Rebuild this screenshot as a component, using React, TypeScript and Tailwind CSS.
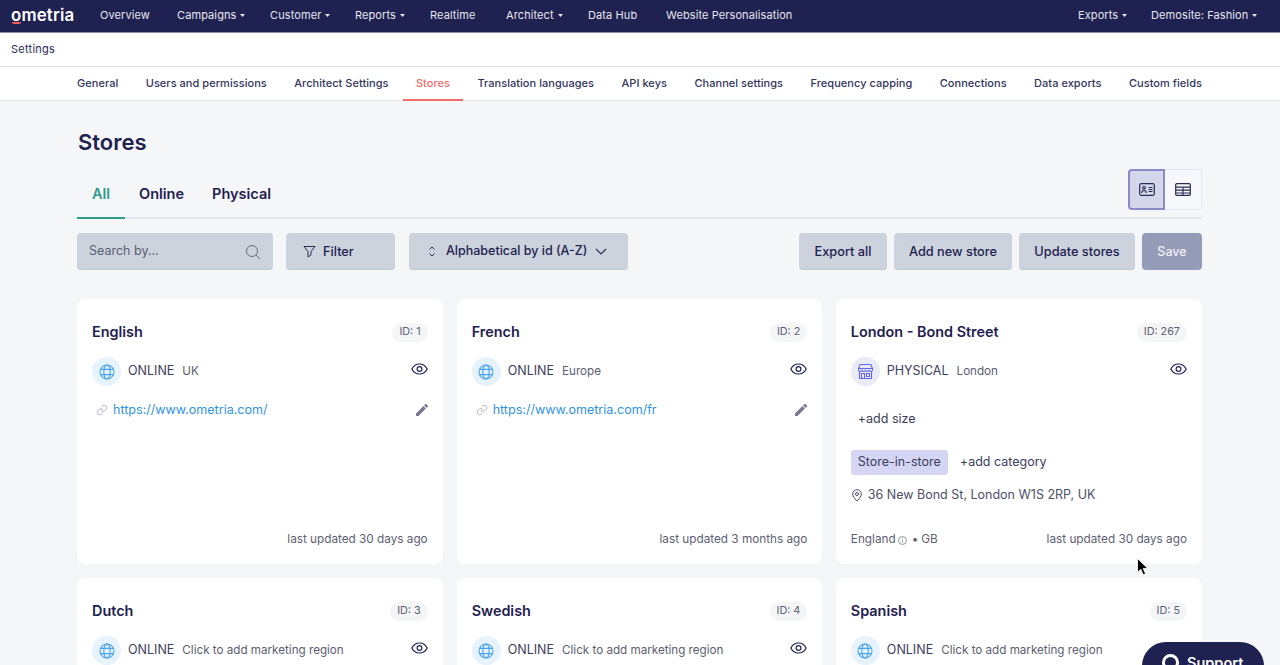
import React from "react";

const INTER = "font-['Inter',sans-serif]";
const NAVFONT = "font-['Inter',sans-serif]";

function Caret() {
  return (
    <svg width="5" height="3" viewBox="0 0 5 3" className="ml-[4px] mt-[1px]">
      <path d="M0 0h5L2.5 3z" fill="currentColor" />
    </svg>
  );
}

function NavItem({ label, caret, w }: { label: string; caret?: boolean; w: string }) {
  return (
    <div className={`flex items-center text-[11px] tracking-[0.1px] text-[#e6e7ee] ${w}`}>
      <span className="whitespace-nowrap">{label}</span>
      {caret && <Caret />}
    </div>
  );
}

function Globe() {
  return (
    <svg width="16" height="16" viewBox="0 0 16 16" fill="none" stroke="#4aa3ee" strokeWidth="1.1">
      <circle cx="8" cy="8" r="7" />
      <ellipse cx="8" cy="8" rx="3.2" ry="7" />
      <path d="M1.6 5.4h12.8M1.6 10.6h12.8" />
    </svg>
  );
}

function Shop() {
  return (
    <svg width="17" height="17" viewBox="0 0 17 17" fill="none" stroke="#6366e8" strokeWidth="1.1">
      <path d="M3.2 1.5h10.6l1.7 4v1.2a1.7 1.7 0 0 1-3.5 0 1.7 1.7 0 0 1-3.5 0 1.7 1.7 0 0 1-3.5 0 1.7 1.7 0 0 1-3.5 0V5.500z" />
      <path d="M1.500 5.500h14" />
      <path d="M2.500 8.500v7h12v-7" />
      <path d="M4.500 15.500v-5h3v5M9.500 10.500h3v3h-3z" />
    </svg>
  );
}

function Eye() {
  return (
    <svg width="17" height="12" viewBox="0 0 17 12" fill="none" stroke="#1f2150" strokeWidth="1.2">
      <path d="M.8 6C2.500 2.700 5.200 1 8.500 1s6 1.700 7.700 5c-1.700 3.300-4.400 5-7.700 5S2.500 9.300.8 6z" />
      <circle cx="8.500" cy="6" r="2.400" />
    </svg>
  );
}

function LinkIcon() {
  return (
    <svg width="12" height="12" viewBox="0 0 24 24" fill="none" stroke="#b4b8c4" strokeWidth="2" strokeLinecap="round">
      <path d="M10 13a5 5 0 0 0 7.500.5l3-3a5 5 0 0 0-7-7l-1.700 1.700" />
      <path d="M14 11a5 5 0 0 0-7.500-.5l-3 3a5 5 0 0 0 7 7l1.700-1.700" />
    </svg>
  );
}

function Pencil() {
  return (
    <svg width="12" height="12" viewBox="0 0 12 12" fill="#7a7890">
      <path d="M0 12V9.500L7.400 2.100l2.500 2.500L2.500 12zM8.100 1.400 9.200.3a1 1 0 0 1 1.400 0l1.100 1.100a1 1 0 0 1 0 1.400l-1.100 1.100z" />
    </svg>
  );
}

type Store = {
  name: string;
  id: number;
  kind: "ONLINE" | "PHYSICAL";
  region: string;
  url?: string;
  updated?: string;
};

function Card({ s, third, children }: { s: Store; third?: boolean; children?: React.ReactNode }) {
  const physical = s.kind === "PHYSICAL";
  return (
    <div className={`flex h-[265px] flex-col rounded-[8px] bg-white pt-[22px] pr-[15px] pb-[15px] ${third ? "pl-[14.5px]" : "pl-[15px]"}`}>
      <div className="flex h-[22px] items-center justify-between">
        <div className="text-[14.4px] font-semibold text-[#1f2150]">{s.name}</div>
        <div className="flex h-[19px] items-center rounded-full bg-[#f4f5f7] px-[7px] text-[10.8px] text-[#5c5e72]">ID: {s.id}</div>
      </div>
      <div className="mt-[14px] flex h-[29px] items-center">
        <div className={`flex size-[29px] items-center justify-center rounded-full ${physical ? "bg-[#e9ebf6]" : "bg-[#e6f2fc]"}`}>
          {physical ? <Shop /> : <Globe />}
        </div>
        <span className="ml-[7px] text-[12.5px] text-[#3b3d5c]">{s.kind}</span>
        <span className="ml-[8px] text-[11.65px] text-[#5c5e72]">{s.region}</span>
        <div className="-mt-[5px] ml-auto"><Eye /></div>
      </div>
      {s.url && (
        <div className="mt-[16px] flex h-[16px] items-center">
          <div className="ml-[4px]"><LinkIcon /></div>
          <span className="ml-[5px] text-[12.55px] text-[#2f93e8]">{s.url}</span>
          <div className="ml-auto"><Pencil /></div>
        </div>
      )}
      {children}
      {s.updated && (
        <div className="mt-auto flex items-center justify-end text-[11.75px] text-[#5c5e72]">{s.updated}</div>
      )}
    </div>
  );
}

function Btn({ children, w }: { children: React.ReactNode; w: string }) {
  return (
    <div className={`flex h-[37px] items-center justify-center rounded-[4px] border-b border-[#c1c8d3] bg-[#ccd3dc] pt-px font-medium text-[#1f2150] ${w}`}>
      {children}
    </div>
  );
}

const tabs = ["General", "Users and permissions", "Architect Settings", "Stores", "Translation languages", "API keys", "Channel settings", "Frequency capping", "Connections", "Data exports", "Custom fields"];

export default function App() {
  return (
    <div className={`relative h-[665px] w-[1280px] overflow-hidden bg-[#f5f6f8] ${INTER}`}>
      <header className={`flex h-[33px] items-center border-b border-[#8d8ea8] bg-[#1f2150] pb-[2px] pl-[11px] ${NAVFONT}`}>
        <div className="relative w-[89px] text-[16.8px] leading-none font-semibold tracking-[0.2px] text-white">
          ometria
          <span className="absolute top-[15px] left-[1px] h-[2px] w-[9px] rounded-b bg-[#f25c5c]" />
        </div>
        <NavItem label="Overview" w="w-[77px]" />
        <NavItem label="Campaigns" caret w="w-[93px]" />
        <NavItem label="Customer" caret w="w-[85px]" />
        <NavItem label="Reports" caret w="w-[75px]" />
        <NavItem label="Realtime" w="w-[76px]" />
        <NavItem label="Architect" caret w="w-[82px]" />
        <NavItem label="Data Hub" w="w-[78px]" />
        <NavItem label="Website Personalisation" w="w-[412px]" />
        <NavItem label="Exports" caret w="w-[73px]" />
        <NavItem label="Demosite: Fashion" caret w="w-[110px]" />
      </header>

      <div className={`flex h-[34px] items-center border-b border-[#dfe0e4] bg-white pl-[11px] text-[11px] tracking-[0.25px] text-[#2b2d55] ${NAVFONT}`}>Settings</div>

      <nav className={`flex h-[34px] justify-between border-b border-[#e4e5e9] bg-white pr-[78px] pl-[77px] text-[11px] font-medium tracking-[0.04px] text-[#33355c] ${NAVFONT}`}>
        {tabs.map((t) =>
          t === "Stores" ? (
            <div key={t} className="relative flex items-center whitespace-nowrap text-[#f56b6b]">
              {t}
              <span className="absolute -right-[13px] -bottom-px -left-[13px] h-[2px] bg-[#f56b6b]" />
            </div>
          ) : (
            <div key={t} className="flex items-center whitespace-nowrap">{t}</div>
          )
        )}
      </nav>

      <main className="px-[77px] pr-[78px]">
        <h1 className="mt-[26px] h-[30px] pl-px text-[22px] leading-[30px] font-semibold text-[#1f2150]">Stores</h1>

        <div className="mt-[11px] flex h-[51px] items-stretch justify-between border-b-2 border-[#e3e5ee]">
          <div className="flex text-[14.500px] font-semibold text-[#1f2150]">
            <div className="relative flex w-[48px] items-center justify-center pt-[2px] text-[#2d9d8a]">
              All
              <span className="absolute right-0 -bottom-[2px] left-0 h-[2px] bg-[#2d9d8a]" />
            </div>
            <div className="ml-[14px] flex items-center pt-[2px]">Online</div>
            <div className="ml-[28px] flex items-center pt-[2px]">Physical</div>
          </div>
          <div className="mb-[7px] flex h-[41px] self-end">
            <div className="flex w-[37px] items-center justify-center rounded-l-[4px] border-2 border-[#8b88cc] bg-[#d5d6ea]">
              <svg width="16" height="13" viewBox="0 0 16 13" fill="none" stroke="#2b2d55" strokeWidth="1.200">
                <rect x=".7" y=".7" width="14.600" height="11.600" rx="1.500" />
                <circle cx="5" cy="4.800" r="1.300" />
                <path d="M2.600 10c.2-1.700 1.200-2.500 2.400-2.500s2.200.8 2.400 2.500M9.500 4.500h4M9.500 6.500h4M9.500 8.500h4" />
              </svg>
            </div>
            <div className="flex w-[37px] items-center justify-center rounded-r-[4px] border border-l-0 border-[#e4e7f0] bg-[#f7f8fb]">
              <svg width="16" height="13" viewBox="0 0 16 13" fill="none" stroke="#2b2d55" strokeWidth="1.200">
                <rect x=".7" y=".7" width="14.600" height="11.600" rx="1" />
                <path d="M.7 4.200h14.600M.7 7.200h14.600M.7 10h14.600M8 4.200v8" />
              </svg>
            </div>
          </div>
        </div>

        <div className="mt-[14px] flex items-center">
          <div className="flex h-[37px] w-[196px] items-center justify-between rounded-[4px] border-b border-[#c1c8d3] bg-[#ccd3dc] pt-px pr-[12px] pl-[12px] text-[12.500px] text-[#5c5f76]">
            Search by...
            <svg width="16" height="16" viewBox="0 0 16 16" fill="none" stroke="#6a6e80" strokeWidth="1">
              <circle cx="7" cy="7" r="5.500" />
              <path d="m11 11 4 4" />
            </svg>
          </div>
          <Btn w="ml-[13px] w-[109px] !justify-start pl-[17px] text-[12.75px]">
            <svg width="13" height="13" viewBox="0 0 13 13" fill="none" stroke="#2b2d55" strokeWidth="1" strokeLinejoin="round" className="mr-[7px]">
              <path d="M1 1.500h11L8 6.500v3.500l-3 2V6.500z" />
            </svg>
            Filter
          </Btn>
          <Btn w="ml-[14px] w-[219px] !justify-start pl-[19px] text-[12.5px]">
            <svg width="8" height="11" viewBox="0 0 8 11" fill="none" stroke="#2b2d55" strokeWidth="1" className="mr-[10px]">
              <path d="m1.500 3.500 2.500-2.500 2.500 2.500M1.500 7.500 4 10l2.500-2.500" />
            </svg>
            Alphabetical by id (A-Z)
            <svg width="12" height="7" viewBox="0 0 12 7" fill="none" stroke="#2b2d55" strokeWidth="1.100" className="ml-[8px]">
              <path d="m1 1 5 5 5-5" />
            </svg>
          </Btn>
          <Btn w="ml-auto w-[88px] text-[12.75px]">Export all</Btn>
          <Btn w="ml-[7px] w-[118px] text-[12.75px]">Add new store</Btn>
          <Btn w="ml-[7px] w-[116px] text-[12.75px]">Update stores</Btn>
          <div className="ml-[7px] flex h-[37px] w-[60px] items-center justify-center rounded-[4px] bg-[#949cb8] pt-px text-[12.500px] font-medium text-[#eef0f5]">Save</div>
        </div>

        <div className="mt-[29px] grid grid-cols-3 gap-[14px]">
          <Card s={{ name: "English", id: 1, kind: "ONLINE", region: "UK", url: "https://www.ometria.com/", updated: "last updated 30 days ago" }} />
          <Card s={{ name: "French", id: 2, kind: "ONLINE", region: "Europe", url: "https://www.ometria.com/fr", updated: "last updated 3 months ago" }} />
          <Card third s={{ name: "London - Bond Street", id: 267, kind: "PHYSICAL", region: "London" }}>
            <div className="mt-[24px] ml-[7px] text-[12.500px] text-[#3b3d5c]">+add size</div>
            <div className="mt-[21px] flex items-center">
              <span className="flex h-[25px] items-center rounded-[3px] bg-[#d5d6f3] px-[7px] text-[12.500px] text-[#3b3d5c]">Store-in-store</span>
              <span className="ml-[12px] text-[12.500px] text-[#3b3d5c]">+add category</span>
            </div>
            <div className="mt-[12px] flex h-[17px] items-center text-[12.500px] text-[#4e5068]">
              <svg width="10" height="13" viewBox="0 0 10 13" fill="none" stroke="#4e5068" strokeWidth="1" className="mr-[6px] ml-[1px]">
                <path d="M5 12C2 9 .7 7 .7 5a4.300 4.300 0 0 1 8.600 0c0 2-1.300 4-4.300 7z" />
                <circle cx="5" cy="5" r="1.500" />
              </svg>
              36 New Bond St, London W1S 2RP, UK
            </div>
            <div className="mt-auto flex items-center justify-between text-[11.75px] text-[#5c5e72]">
              <div className="flex items-center">
                England
                <svg width="9" height="9" viewBox="0 0 9 9" fill="none" stroke="#7a7c90" strokeWidth=".8" className="mx-[2px]">
                  <circle cx="4.500" cy="4.500" r="4" />
                  <path d="M4.500 4v2.500M4.500 2.300v.8" />
                </svg>
                <span className="mx-[3px]">•</span> GB
              </div>
              <span>last updated 30 days ago</span>
            </div>
          </Card>
          <Card s={{ name: "Dutch", id: 3, kind: "ONLINE", region: "Click to add marketing region" }} />
          <Card s={{ name: "Swedish", id: 4, kind: "ONLINE", region: "Click to add marketing region" }} />
          <Card third s={{ name: "Spanish", id: 5, kind: "ONLINE", region: "Click to add marketing region" }} />
        </div>
      </main>

      <div className="absolute top-[642px] left-[1142px] flex h-[50px] w-[122px] items-start rounded-[24px] bg-[#1f2150] pt-[12px] pl-[20px]">
        <span className="size-[17px] rounded-full border-[3px] border-white" />
        <span className="ml-[8px] text-[14.5px] leading-[17px] font-semibold text-white">Support</span>
      </div>

      <svg width="12" height="18" viewBox="0 0 12 18" className="absolute top-[558px] left-[1137px]">
        <path d="M.5.5v14l3.300-3.200 2.400 5.500 2.400-1-2.400-5.300h4.600z" fill="#000" stroke="#fff" strokeWidth=".8" />
      </svg>
    </div>
  );
}
